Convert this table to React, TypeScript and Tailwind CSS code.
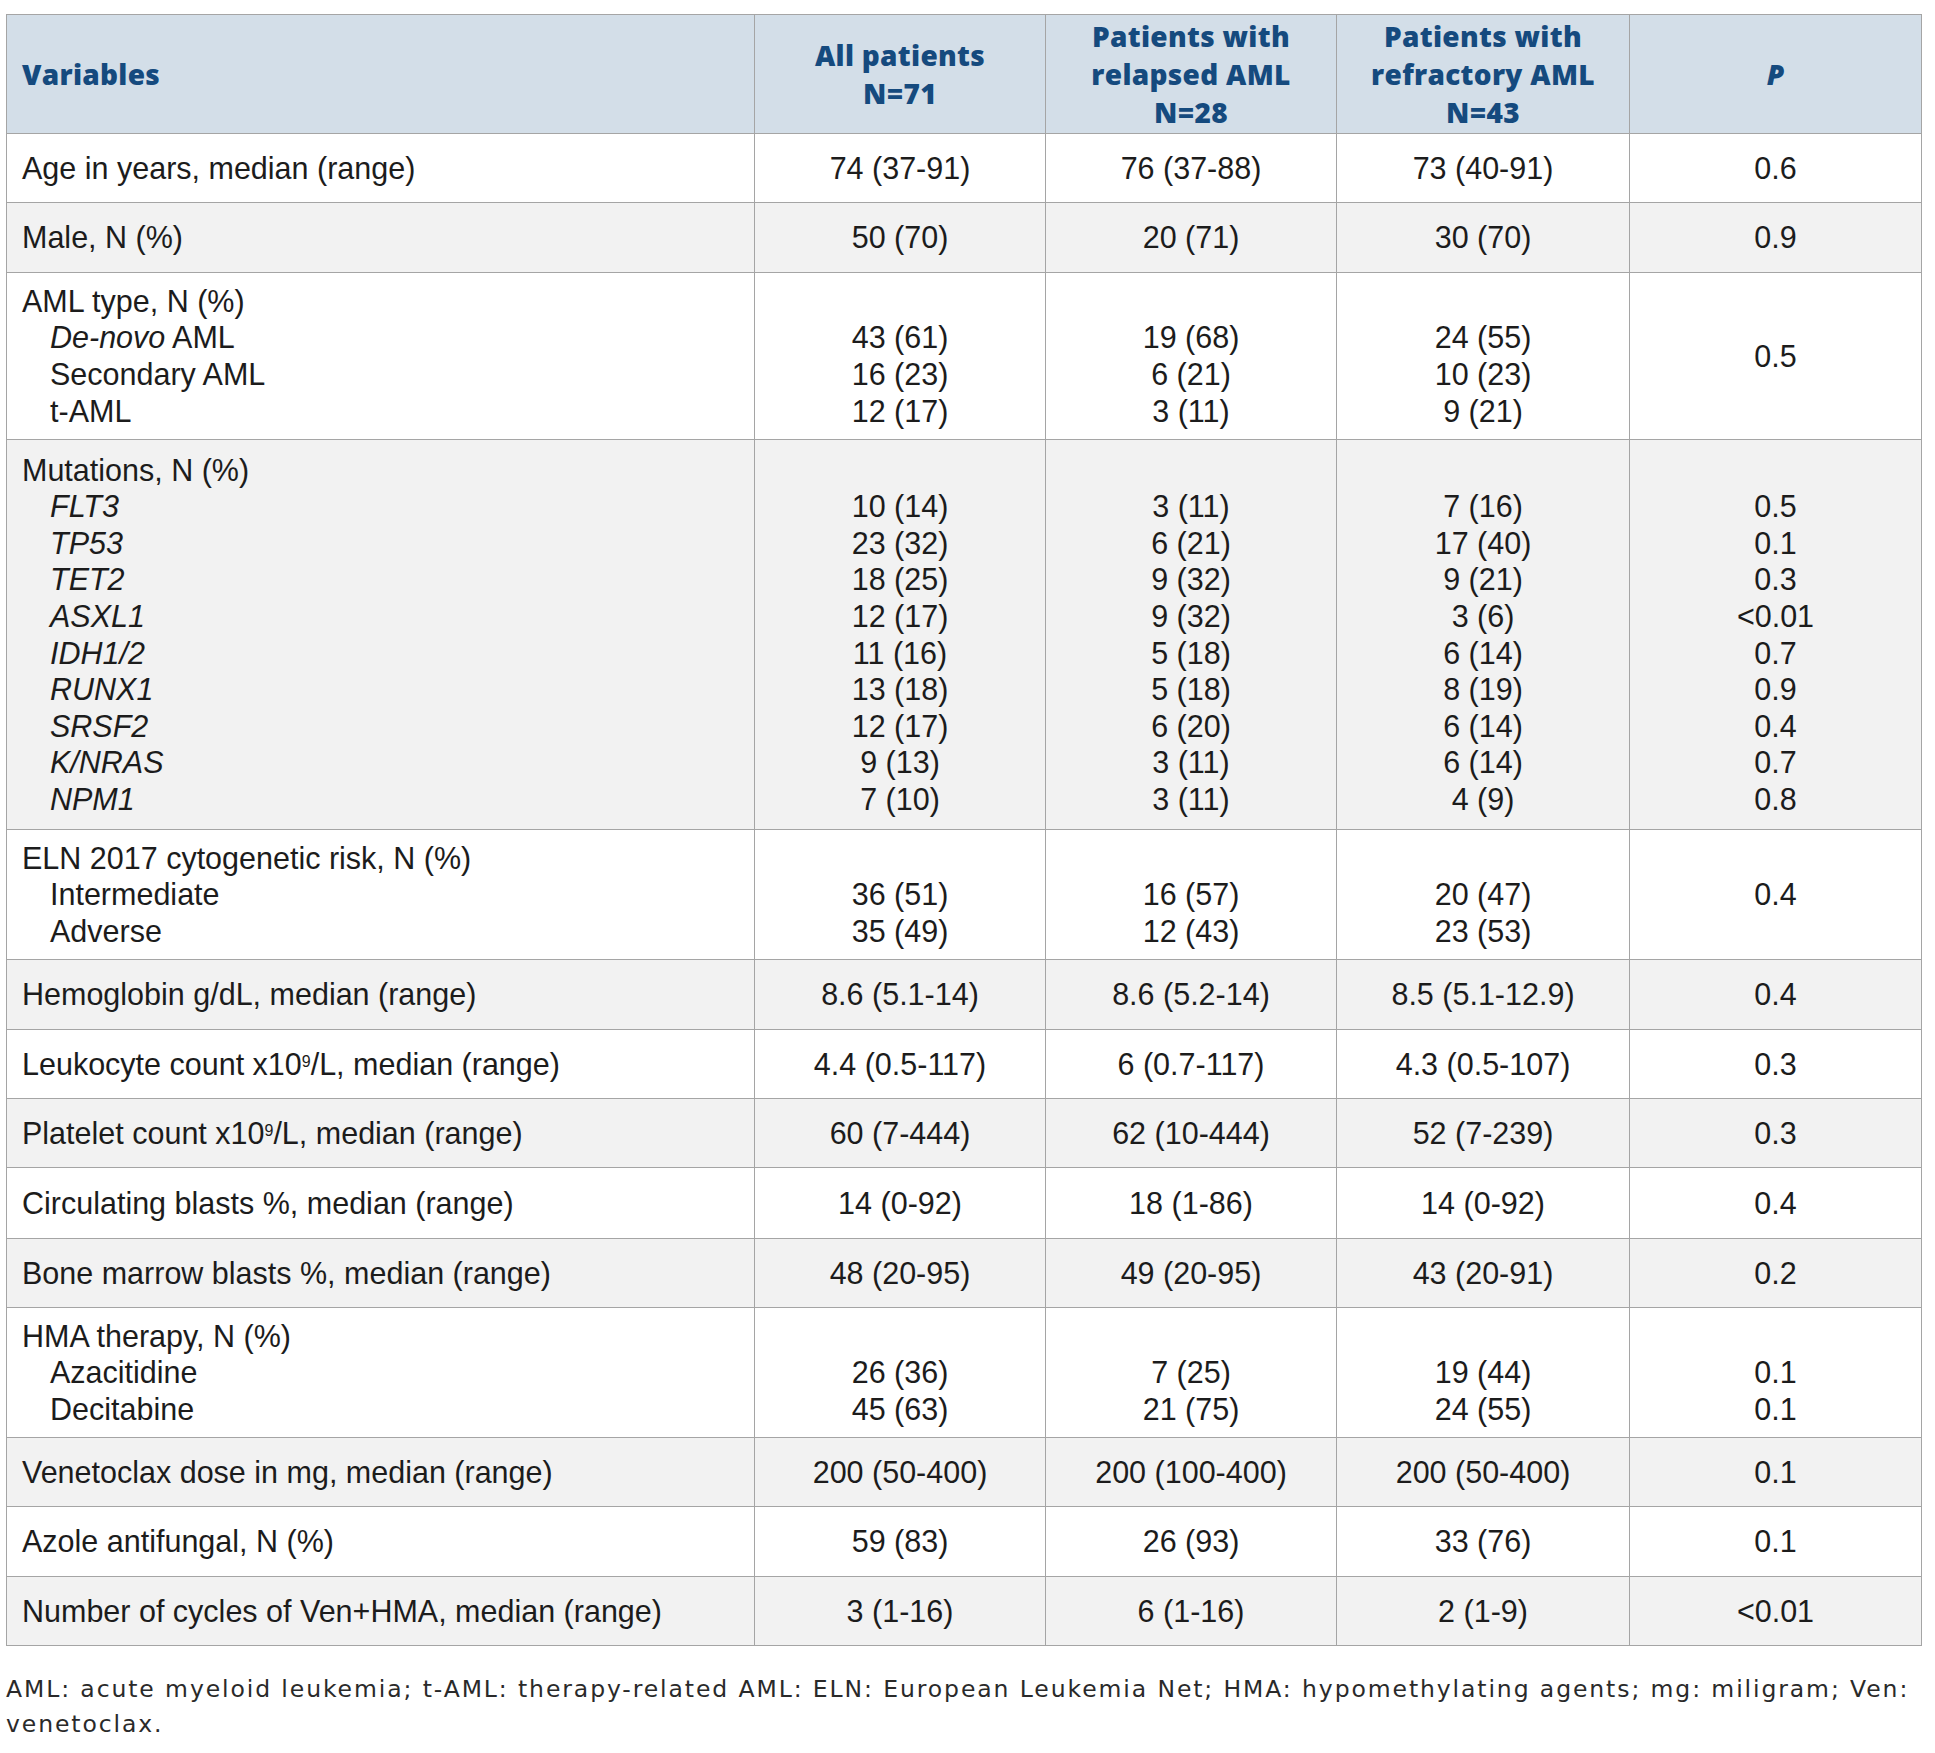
import React from "react";

type Line = { label: React.ReactNode; indent?: boolean; vals?: string[]; p?: string };
type Row = { lines: Line[]; h: string; gray: boolean; pMiddle?: string };

const ROWS: Row[] = [
  { h: "h-[69px]", gray: false, lines: [{ label: "Age in years, median (range)", vals: ["74 (37-91)", "76 (37-88)", "73 (40-91)"], p: "0.6" }] },
  { h: "h-[70px]", gray: true, lines: [{ label: "Male, N (%)", vals: ["50 (70)", "20 (71)", "30 (70)"], p: "0.9" }] },
  {
    h: "h-[167px]",
    gray: false,
    pMiddle: "0.5",
    lines: [
      { label: "AML type, N (%)" },
      { label: <><i>De-novo</i> AML</>, indent: true, vals: ["43 (61)", "19 (68)", "24 (55)"] },
      { label: "Secondary AML", indent: true, vals: ["16 (23)", "6 (21)", "10 (23)"] },
      { label: "t-AML", indent: true, vals: ["12 (17)", "3 (11)", "9 (21)"] },
    ],
  },
  {
    h: "h-[390px]",
    gray: true,
    lines: [
      { label: "Mutations, N (%)" },
      { label: <i>FLT3</i>, indent: true, vals: ["10 (14)", "3 (11)", "7 (16)"], p: "0.5" },
      { label: <i>TP53</i>, indent: true, vals: ["23 (32)", "6 (21)", "17 (40)"], p: "0.1" },
      { label: <i>TET2</i>, indent: true, vals: ["18 (25)", "9 (32)", "9 (21)"], p: "0.3" },
      { label: <i>ASXL1</i>, indent: true, vals: ["12 (17)", "9 (32)", "3 (6)"], p: "<0.01" },
      { label: <i>IDH1/2</i>, indent: true, vals: ["11 (16)", "5 (18)", "6 (14)"], p: "0.7" },
      { label: <i>RUNX1</i>, indent: true, vals: ["13 (18)", "5 (18)", "8 (19)"], p: "0.9" },
      { label: <i>SRSF2</i>, indent: true, vals: ["12 (17)", "6 (20)", "6 (14)"], p: "0.4" },
      { label: <i>K/NRAS</i>, indent: true, vals: ["9 (13)", "3 (11)", "6 (14)"], p: "0.7" },
      { label: <i>NPM1</i>, indent: true, vals: ["7 (10)", "3 (11)", "4 (9)"], p: "0.8" },
    ],
  },
  {
    h: "h-[130px]",
    gray: false,
    pMiddle: "0.4",
    lines: [
      { label: "ELN 2017 cytogenetic risk, N (%)" },
      { label: "Intermediate", indent: true, vals: ["36 (51)", "16 (57)", "20 (47)"] },
      { label: "Adverse", indent: true, vals: ["35 (49)", "12 (43)", "23 (53)"] },
    ],
  },
  { h: "h-[70px]", gray: true, lines: [{ label: "Hemoglobin g/dL, median (range)", vals: ["8.6 (5.1-14)", "8.6 (5.2-14)", "8.5 (5.1-12.9)"], p: "0.4" }] },
  { h: "h-[69px]", gray: false, lines: [{ label: <>Leukocyte count x10<sup className="text-[16px] leading-none">9</sup>/L, median (range)</>, vals: ["4.4 (0.5-117)", "6 (0.7-117)", "4.3 (0.5-107)"], p: "0.3" }] },
  { h: "h-[69px]", gray: true, lines: [{ label: <>Platelet count x10<sup className="text-[16px] leading-none">9</sup>/L, median (range)</>, vals: ["60 (7-444)", "62 (10-444)", "52 (7-239)"], p: "0.3" }] },
  { h: "h-[71px]", gray: false, lines: [{ label: "Circulating blasts %, median (range)", vals: ["14 (0-92)", "18 (1-86)", "14 (0-92)"], p: "0.4" }] },
  { h: "h-[69px]", gray: true, lines: [{ label: "Bone marrow blasts %, median (range)", vals: ["48 (20-95)", "49 (20-95)", "43 (20-91)"], p: "0.2" }] },
  {
    h: "h-[130px]",
    gray: false,
    lines: [
      { label: "HMA therapy, N (%)" },
      { label: "Azacitidine", indent: true, vals: ["26 (36)", "7 (25)", "19 (44)"], p: "0.1" },
      { label: "Decitabine", indent: true, vals: ["45 (63)", "21 (75)", "24 (55)"], p: "0.1" },
    ],
  },
  { h: "h-[69px]", gray: true, lines: [{ label: "Venetoclax dose in mg, median (range)", vals: ["200 (50-400)", "200 (100-400)", "200 (50-400)"], p: "0.1" }] },
  { h: "h-[70px]", gray: false, lines: [{ label: "Azole antifungal, N (%)", vals: ["59 (83)", "26 (93)", "33 (76)"], p: "0.1" }] },
  { h: "h-[69px]", gray: true, lines: [{ label: "Number of cycles of Ven+HMA, median (range)", vals: ["3 (1-16)", "6 (1-16)", "2 (1-9)"], p: "<0.01" }] },
];

const cell = "border border-[#a5a5a5] align-middle";
const head = "border border-[#a5a5a5] align-middle text-center font-extrabold text-[#154a7e] text-[28px] leading-[38px] tracking-[0.3px] [font-family:'Open_Sans',sans-serif]";

export default function App() {
  return (
    <div className="bg-white min-h-[1753px] pt-[14px] pl-[6px] text-[#1c1c1c] [font-family:'Liberation_Sans',Arial,sans-serif]">
      <table className="table-fixed border-collapse w-[1915px]">
        <colgroup>
          <col className="w-[748px]" />
          <col className="w-[291px]" />
          <col className="w-[291px]" />
          <col className="w-[293px]" />
          <col className="w-[292px]" />
        </colgroup>
        <thead>
          <tr className="h-[119px] bg-[#d3dee8]">
            <th className={head + " !text-left pl-[15px]"}>Variables</th>
            <th className={head}>All patients<br />N=71</th>
            <th className={head}>Patients with<br />relapsed AML<br />N=28</th>
            <th className={head}>Patients with<br />refractory AML<br />N=43</th>
            <th className={head}><i>P</i></th>
          </tr>
        </thead>
        <tbody className="text-[30.5px] leading-[36.6px]">
          {ROWS.map((row, i) => (
            <tr key={i} className={row.h + " " + (row.gray ? "bg-[#f2f2f2]" : "bg-white")}>
              <td className={cell + " pl-[15px]"}>
                {row.lines.map((l, j) => (
                  <div key={j} className={l.indent ? "pl-[28px]" : ""}>{l.label}</div>
                ))}
              </td>
              {[0, 1, 2].map((c) => (
                <td key={c} className={cell + " text-center"}>
                  {row.lines.map((l, j) => (
                    <div key={j}>{l.vals ? l.vals[c] : "\u00a0"}</div>
                  ))}
                </td>
              ))}
              <td className={cell + " text-center"}>
                {row.pMiddle ? (
                  <div>{row.pMiddle}</div>
                ) : (
                  row.lines.map((l, j) => <div key={j}>{l.p ?? "\u00a0"}</div>)
                )}
              </td>
            </tr>
          ))}
        </tbody>
      </table>
      <p className="mt-[26px] text-[23.5px] leading-[35px] tracking-[1.9px] text-[#2a2a2a] [font-family:'DejaVu_Sans',sans-serif]">
        AML: acute myeloid leukemia; t-AML: therapy-related AML: ELN: European Leukemia Net; HMA: hypomethylating agents; mg: miligram; Ven:
        <br />
        venetoclax.
      </p>
    </div>
  );
}
